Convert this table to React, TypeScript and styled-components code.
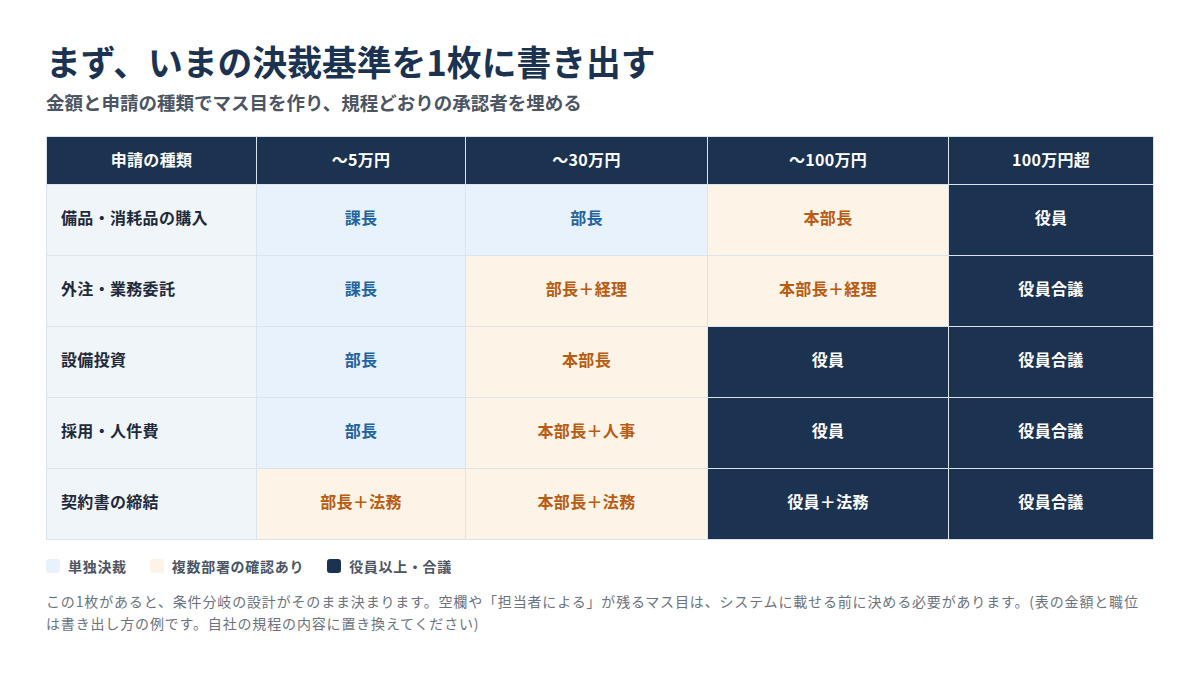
import React from "react";
import styled, { createGlobalStyle } from "styled-components";

const GlobalStyle = createGlobalStyle`
  html, body { margin: 0; padding: 0; background: #ffffff; }
  body { font-family: "Noto Sans CJK JP", "Noto Sans", sans-serif; }
`;

const Page = styled.div`
  width: 1200px;
  height: 675px;
  box-sizing: border-box;
  padding: 39px 47px 0 46px;
  background: #ffffff;
`;

const Title = styled.h1`
  margin: 0;
  font-size: 34.8px;
  line-height: 1.3;
  font-weight: 700;
  color: #1b3350;
`;

const Subtitle = styled.p`
  margin: 5px 0 0;
  font-size: 18.5px;
  line-height: 1.5;
  font-weight: 700;
  color: #4b5563;
`;

const Table = styled.table`
  margin-top: 19px;
  width: 1107px;
  border-collapse: collapse;
  table-layout: fixed;
`;

type Tone = "solo" | "multi" | "exec";

const HeadCell = styled.th`
  height: 44px;
  padding: 0 0 3px;
  background: #1b3350;
  color: #ffffff;
  font-size: 16px;
  font-weight: 700;
  letter-spacing: 0.02em;
  text-align: center;
  border: 1px solid #dbe3ec;
`;

const RowHead = styled.th`
  height: 65px;
  padding: 0 0 5px 14px;
  background: #f0f5fa;
  color: #1e2a3b;
  font-size: 16px;
  font-weight: 700;
  letter-spacing: 0.02em;
  text-align: left;
  border: 1px solid #dbe3ec;
`;

const toneBg: Record<Tone, string> = {
  solo: "#e8f2fc",
  multi: "#fdf3e7",
  exec: "#1b3350",
};
const toneFg: Record<Tone, string> = {
  solo: "#1f64a0",
  multi: "#b85c12",
  exec: "#ffffff",
};

const Cell = styled.td<{ $tone: Tone }>`
  height: 65px;
  padding: 0 0 5px;
  background: ${(p) => toneBg[p.$tone]};
  color: ${(p) => toneFg[p.$tone]};
  font-size: 16px;
  font-weight: 700;
  letter-spacing: 0.02em;
  text-align: center;
  border: 1px solid #dbe3ec;
`;

const Legend = styled.div`
  display: flex;
  align-items: center;
  gap: 23px;
  margin-top: 16px;
`;

const LegendItem = styled.div`
  display: flex;
  align-items: center;
  gap: 8px;
  font-size: 14px;
  font-weight: 700;
  letter-spacing: 0.05em;
  color: #4b5563;
  line-height: 20px;
`;

const Swatch = styled.span<{ $tone: Tone }>`
  width: 14px;
  height: 14px;
  border-radius: 3px;
  background: ${(p) => toneBg[p.$tone]};
`;

const Note = styled.p`
  margin: 14px 0 0;
  font-size: 14px;
  line-height: 22px;
  letter-spacing: 0.06em;
  color: #6b7280;
`;

const columns = ["申請の種類", "〜5万円", "〜30万円", "〜100万円", "100万円超"];
const widths = [210, 209, 242, 241, 205];

const rows: { label: string; cells: [string, Tone][] }[] = [
  {
    label: "備品・消耗品の購入",
    cells: [
      ["課長", "solo"],
      ["部長", "solo"],
      ["本部長", "multi"],
      ["役員", "exec"],
    ],
  },
  {
    label: "外注・業務委託",
    cells: [
      ["課長", "solo"],
      ["部長＋経理", "multi"],
      ["本部長＋経理", "multi"],
      ["役員合議", "exec"],
    ],
  },
  {
    label: "設備投資",
    cells: [
      ["部長", "solo"],
      ["本部長", "multi"],
      ["役員", "exec"],
      ["役員合議", "exec"],
    ],
  },
  {
    label: "採用・人件費",
    cells: [
      ["部長", "solo"],
      ["本部長＋人事", "multi"],
      ["役員", "exec"],
      ["役員合議", "exec"],
    ],
  },
  {
    label: "契約書の締結",
    cells: [
      ["部長＋法務", "multi"],
      ["本部長＋法務", "multi"],
      ["役員＋法務", "exec"],
      ["役員合議", "exec"],
    ],
  },
];

export default function App() {
  return (
    <Page>
      <GlobalStyle />
      <Title>まず、いまの決裁基準を1枚に書き出す</Title>
      <Subtitle>金額と申請の種類でマス目を作り、規程どおりの承認者を埋める</Subtitle>
      <Table>
        <colgroup>
          {widths.map((w, i) => (
            <col key={i} style={{ width: w }} />
          ))}
        </colgroup>
        <thead>
          <tr>
            {columns.map((c) => (
              <HeadCell key={c}>{c}</HeadCell>
            ))}
          </tr>
        </thead>
        <tbody>
          {rows.map((r) => (
            <tr key={r.label}>
              <RowHead>{r.label}</RowHead>
              {r.cells.map(([t, tone], i) => (
                <Cell key={i} $tone={tone}>
                  {t}
                </Cell>
              ))}
            </tr>
          ))}
        </tbody>
      </Table>
      <Legend>
        <LegendItem>
          <Swatch $tone="solo" />
          単独決裁
        </LegendItem>
        <LegendItem>
          <Swatch $tone="multi" />
          複数部署の確認あり
        </LegendItem>
        <LegendItem>
          <Swatch $tone="exec" />
          役員以上・合議
        </LegendItem>
      </Legend>
      <Note>
        この1枚があると、条件分岐の設計がそのまま決まります。空欄や「担当者による」が残るマス目は、システムに載せる前に決める必要があります。(表の金額と職位は書き出し方の例です。自社の規程の内容に置き換えてください)
      </Note>
    </Page>
  );
}
